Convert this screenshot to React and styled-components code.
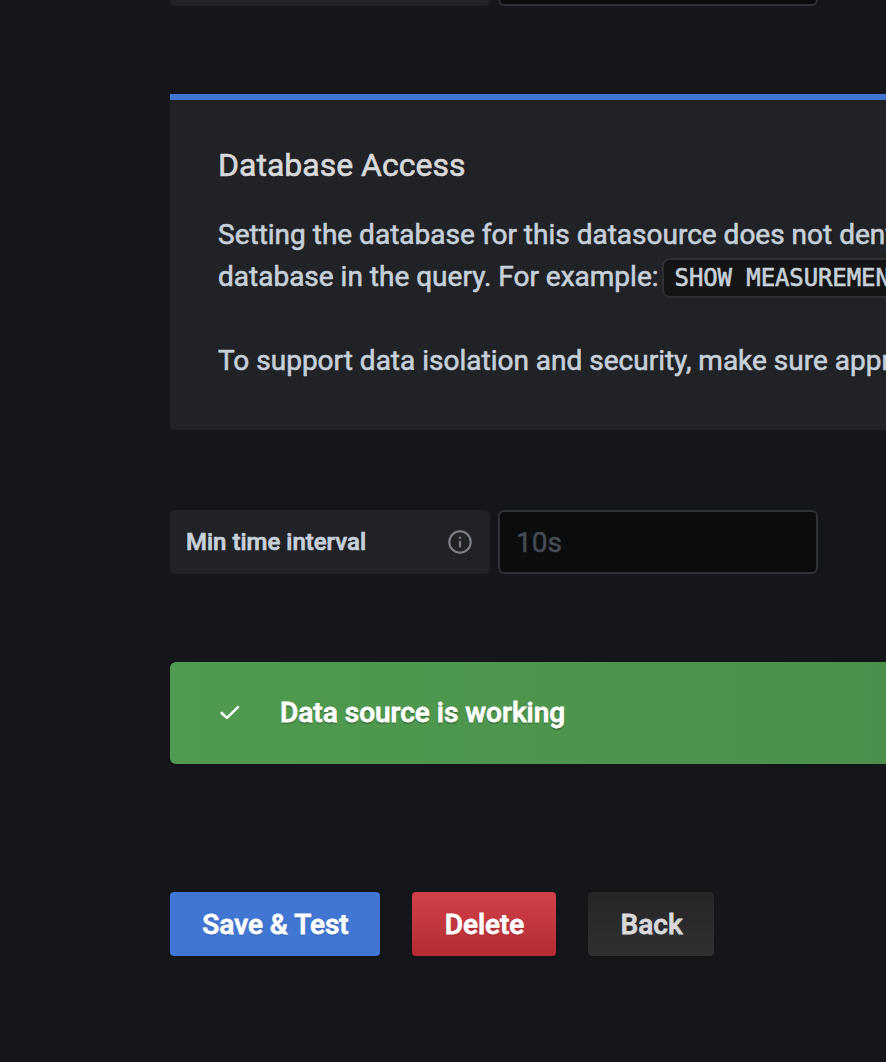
import React from 'react';
import styled, { createGlobalStyle } from 'styled-components';

const Global = createGlobalStyle`
  * { box-sizing: border-box; }
  html, body { margin: 0; background: #15161a; }
  body {
    width: 886px; height: 1062px; overflow: hidden;
    font-family: Roboto, "Liberation Sans", sans-serif;
    color: #c7d0d9;
  }
`;
const Page = styled.main`
  width: 886px; height: 1062px; overflow: hidden;
  padding-left: 170px;
  display: flex; flex-direction: column;
`;
const Field = styled.div`
  display: flex; gap: 8px; flex: none;
  height: ${p => p.$clipped ? '6px' : '64px'};
  align-items: flex-end;
  overflow: hidden;
`;
const Label = styled.label`
  width: 320px; height: 64px; flex: none;
  display: flex; align-items: center; justify-content: space-between;
  padding: 0 18px 0 16px;
  background: #212226; border-radius: 5px;
  font-size: 24px; font-weight: 500;
  -webkit-text-stroke: 0.7px currentColor;
`;
const Input = styled.input`
  width: 320px; height: 64px; flex: none;
  padding: 0 16px; margin: 0;
  background: #0b0c0e; border: 2px solid #2c3235; border-radius: 6px;
  font: 400 28px Roboto, sans-serif; color: #c7d0d9; outline: none;
  &::placeholder { color: #464c54; opacity: 1; -webkit-text-stroke: 0.5px #464c54; }
`;
const InfoBox = styled.section`
  margin-top: 88px; width: 1400px; height: 336px; flex: none;
  padding: 45px 48px 0;
  background: #212226; border-top: 6px solid #4176d2;
  -webkit-text-stroke: 0.6px currentColor;
`;
const Title = styled.h5`
  margin: 0 0 29px; font-size: 32px; line-height: 40px; font-weight: 400; color: #d8d9da;
`;
const Text = styled.p`
  margin: 0; font-size: 28px; line-height: 42px; white-space: nowrap;
`;
const Code = styled.code`
  display: inline-block; height: 40px; line-height: 37px;
  margin: -1px 0 0 3px; padding: 0 10px 0 11px;
  border: 2px solid #2f2f32; border-radius: 8px; background: #141414;
  font-family: "DejaVu Sans Mono", monospace; font-size: 24px;
  letter-spacing: -0.1px;
  vertical-align: middle;
`;
const Interval = styled.div`margin-top: 80px;`;
const Alert = styled.div`
  margin-top: 88px; width: 1400px; height: 102px; flex: none;
  display: flex; align-items: center; gap: 40px; padding-left: 50px;
  border-radius: 6px; color: #fff;
  background: linear-gradient(90deg, #509b50, #458645);
  font-size: 28px; font-weight: 500; text-shadow: 0 2px 1px rgba(0,0,0,.25);
  -webkit-text-stroke: 0.8px currentColor;
`;
const Message = styled.span`padding-bottom: 2px;`;
const Actions = styled.div`display: flex; gap: 32px; margin-top: 128px;`;
const Button = styled.button`
  width: ${p => p.$width}px; height: 64px; padding: 0 0 0 1px; border: 0; border-radius: 4px;
  background: ${p => p.$bg}; color: ${p => p.$color || '#fff'};
  font: 500 28px Roboto, sans-serif;
  text-shadow: ${p => p.$color ? 'none' : '0 2px 1px rgba(0,0,0,.1)'};
  -webkit-text-stroke: 0.8px currentColor;
`;

export default function App() {
  return (
    <>
      <Global />
      <Page>
        <Field $clipped><Label /><Input /></Field>
        <InfoBox>
          <Title>Database Access</Title>
          <Text>Setting the database for this datasource does not deny access to other databases.</Text>
          <Text>database in the query. For example:<Code>SHOW MEASUREMENTS</Code></Text>
          <Text>&nbsp;</Text>
          <Text>To support data isolation and security, make sure appropriate permissions</Text>
        </InfoBox>
        <Interval>
          <Field>
            <Label>
              Min time interval
              <svg width="24" height="24" viewBox="0 0 24 24" fill="none" stroke="#7b8087" strokeWidth="2.1">
                <circle cx="12" cy="12" r="10.7" />
                <path d="M12 11.8v4.8" strokeLinecap="round" />
                <circle cx="12" cy="7.6" r="1.2" fill="#7b8087" stroke="none" />
              </svg>
            </Label>
            <Input placeholder="10s" />
          </Field>
        </Interval>
        <Alert>
          <svg width="20" height="20" viewBox="0 0 20 20" fill="none" stroke="#fff" strokeWidth="2.6" strokeLinecap="round" strokeLinejoin="round">
            <path d="M1.7 10 6.9 14.9 18 4.1" />
          </svg>
          <Message>Data source is working</Message>
        </Alert>
        <Actions>
          <Button $width={210} $bg="#4176d2">Save &amp; Test</Button>
          <Button $width={144} $bg="linear-gradient(#d04148, #b52b32)">Delete</Button>
          <Button $width={126} $bg="linear-gradient(#262628, #303032)" $color="#d8d9da">Back</Button>
        </Actions>
      </Page>
    </>
  );
}
